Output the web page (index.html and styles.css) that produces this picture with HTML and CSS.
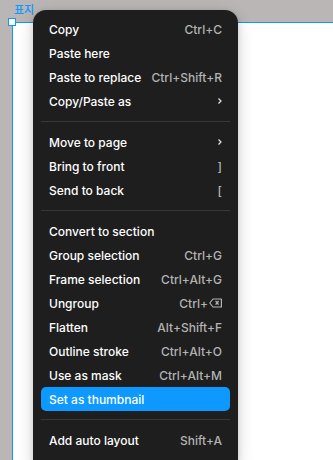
FILE: index.html
```html
<!DOCTYPE html>
<html>
  <head>
    <meta charset="utf-8" />
    <title>Context menu</title>
    <link rel="stylesheet" href="styles.css">
  </head>
  <body>
    <div class="stage">
      <div class="label">표지</div>
      <div class="frame">
        <span class="handle"></span>
      </div>

      <ul class="menu">
        <li class="item"><span>Copy</span><span class="key">Ctrl+C</span></li>
        <li class="item"><span>Paste here</span></li>
        <li class="item"><span>Paste to replace</span><span class="key">Ctrl+Shift+R</span></li>
        <li class="item"><span>Copy/Paste as</span>
          <svg class="chev" width="6" height="8" viewBox="0 0 6 8"><path d="M1.5 1.5 L4 4 L1.5 6.5" fill="none" stroke="#e6e6e6" stroke-width="1.2"/></svg>
        </li>
        <li class="sep"></li>
        <li class="item"><span>Move to page</span>
          <svg class="chev" width="6" height="8" viewBox="0 0 6 8"><path d="M1.5 1.5 L4 4 L1.5 6.5" fill="none" stroke="#e6e6e6" stroke-width="1.2"/></svg>
        </li>
        <li class="item"><span>Bring to front</span><span class="key">]</span></li>
        <li class="item"><span>Send to back</span><span class="key">[</span></li>
        <li class="sep"></li>
        <li class="item"><span>Convert to section</span></li>
        <li class="item"><span>Group selection</span><span class="key">Ctrl+G</span></li>
        <li class="item"><span>Frame selection</span><span class="key">Ctrl+Alt+G</span></li>
        <li class="item"><span>Ungroup</span><span class="key">Ctrl+<svg class="bksp" width="13" height="10" viewBox="0 0 13 10"><path d="M4 1 H12.4 V9 H4 L0.8 5 Z" fill="none" stroke="#b3b3b3" stroke-width="1.2" stroke-linejoin="round"/><path d="M6.6 3 L9.6 6.6 M9.6 3 L6.6 6.6" stroke="#b3b3b3" stroke-width="1.3"/></svg></span></li>
        <li class="item"><span>Flatten</span><span class="key">Alt+Shift+F</span></li>
        <li class="item"><span>Outline stroke</span><span class="key">Ctrl+Alt+O</span></li>
        <li class="item"><span>Use as mask</span><span class="key">Ctrl+Alt+M</span></li>
        <li class="item active"><span>Set as thumbnail</span></li>
        <li class="sep"></li>
        <li class="item"><span>Add auto layout</span><span class="key">Shift+A</span></li>
      </ul>
    </div>
  </body>
</html>
```

FILE: styles.css
```css
* {
  margin: 0;
  padding: 0;
  box-sizing: border-box;
}
li {
  list-style: none;
}
html,
body {
  height: 100%;
  overflow: hidden;
}
body {
  background: #bab6b5;
  font-family: Inter, "Noto Sans CJK KR", sans-serif;
}
.stage {
  position: relative;
  height: 460px;
  display: flex;
  flex-direction: column;
}
.label {
  height: 22px;
  padding: 2px 0 0 14px;
  font: 500 11px/14px "Noto Sans CJK KR", sans-serif;
  color: #0d99ff;
}
.frame {
  position: relative;
  flex: 1;
  margin-left: 12px;
  background: #fff;
  border-top: 1.5px solid #0d99ff;
  border-left: 1.5px solid #0d99ff;
}
.handle {
  position: absolute;
  left: -5px;
  top: -5px;
  width: 8px;
  height: 8px;
  background: #fff;
  border: 1px solid #0d99ff;
}
/* menu sits over the canvas */
.menu {
  position: absolute;
  left: 33px;
  top: 10px;
  width: 205px;
  padding: 7px 8px 20px;
  background: #1e1e1e;
  border-radius: 13px;
  box-shadow: 0 4px 16px rgba(0, 0, 0, 0.18), 0 1px 5px rgba(0, 0, 0, 0.12);
}
.item {
  display: flex;
  align-items: center;
  justify-content: space-between;
  height: 24px;
  padding: 0 8px;
  border-radius: 5px;
  font-size: 12px;
  font-weight: 500;
  color: #fff;
  white-space: nowrap;
}
.item.active {
  background: #0d99ff;
}
.key {
  display: flex;
  align-items: center;
  color: #b3b3b3;
}
.bksp {
  margin-left: 1px;
}
.chev {
  margin-right: -1px;
}
.sep {
  height: 1px;
  margin: 8px 0;
  background: #383838;
}
```
